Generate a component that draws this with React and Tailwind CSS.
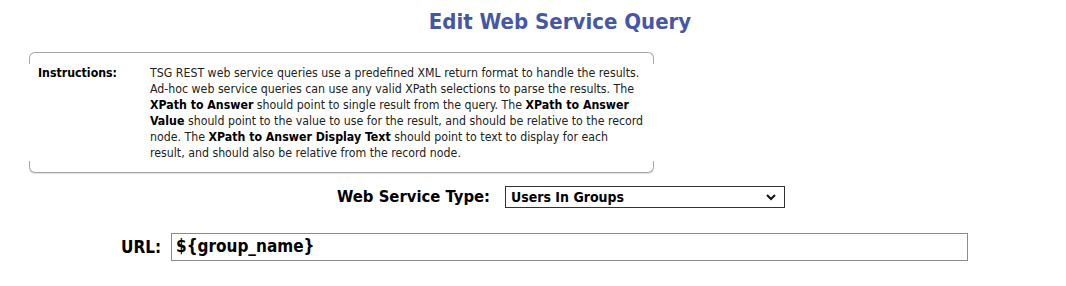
export default function App() {
  return (
    <div className="w-[1066px] h-[286px] bg-white text-black font-['DejaVu_Sans_Condensed','DejaVu_Sans',sans-serif]">
      <div className="pt-[8px] pl-[54px] text-center">
        <h1 className="text-[22px] leading-[28px] font-bold text-[#4657a6] font-['Liberation_Sans_Narrow','DejaVu_Sans_Condensed',sans-serif]">
          Edit Web Service Query
        </h1>
      </div>

      <div className="ml-[29px] mt-[16px] w-[625px] h-[121px] flex flex-col">
        <div className="h-[12px] rounded-t-[6px] border-t border-l border-r border-[#a6a6a6]" />
        <div className="flex-1 flex items-start pt-[1px] text-[12.25px] leading-[16px] text-[#222]">
          <div className="w-[121px] pl-[9px] font-bold text-black">Instructions:</div>
          <p className="whitespace-nowrap">
            TSG REST web service queries use a predefined XML return format to handle the results.<br />
            Ad-hoc web service queries can use any valid XPath selections to parse the results. The<br />
            <b className="text-black">XPath to Answer</b> should point to single result from the query. The <b className="text-black">XPath to Answer</b><br />
            <b className="text-black">Value</b> should point to the value to use for the result, and should be relative to the record<br />
            node. The <b className="text-black">XPath to Answer Display Text</b> should point to text to display for each<br />
            result, and should also be relative from the record node.
          </p>
        </div>
        <div className="h-[12px] rounded-b-[6px] border-b border-l border-r border-[#a6a6a6] shadow-[0_1px_1px_rgba(0,0,0,0.12)]" />
      </div>

      <div className="mt-[13px] h-[22px] flex items-center">
        <label className="ml-[337px] w-[168px] text-[16.5px] leading-[22px] font-bold">Web Service Type:</label>
        <div className="w-[280px] h-[22px] border border-[#333] flex items-center justify-between px-[5px]">
          <span className="text-[14px] font-bold">Users In Groups</span>
          <svg width="12" height="8" viewBox="0 0 12 8" className="mr-[2px]">
            <path d="M2 2 L6 6 L10 2" fill="none" stroke="#111" strokeWidth="2" />
          </svg>
        </div>
      </div>

      <div className="mt-[25px] h-[28px] flex items-center">
        <label className="ml-[121px] w-[50px] text-[17px] leading-[28px] font-bold">URL:</label>
        <div className="w-[797px] h-[28px] border border-[#8c8c8c] flex items-center px-[4px]">
          <span className="text-[17px] font-bold">{'${group_name}'}</span>
        </div>
      </div>
    </div>
  );
}
